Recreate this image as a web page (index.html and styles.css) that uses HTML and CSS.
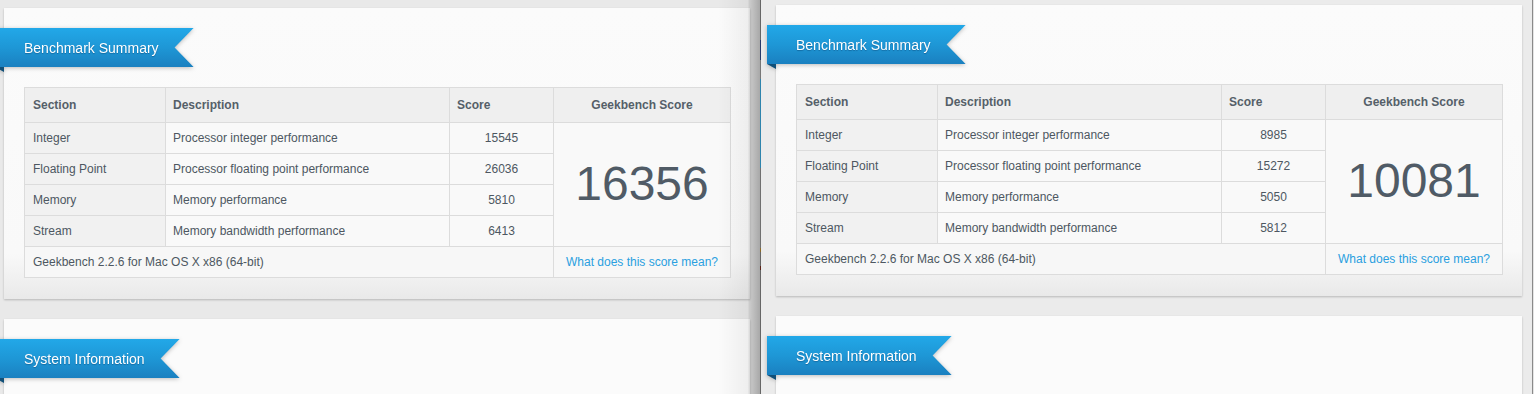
FILE: index.html
```html
<!DOCTYPE html>
<html lang="en">
<head>
<meta charset="utf-8">
<title>Geekbench comparison</title>
<link rel="stylesheet" href="styles.css">
</head>
<body>
<div class="desk">
  <div class="shot shot-left">
    <section class="card card-summary">
      <div class="ribbon">Benchmark Summary</div>
      <table class="bench">
        <colgroup><col class="c-sec"><col class="c-desc"><col class="c-score"><col class="c-gb"></colgroup>
        <thead>
          <tr><th class="sec">Section</th><th>Description</th><th>Score</th><th class="center">Geekbench Score</th></tr>
        </thead>
        <tbody>
          <tr><td class="sec">Integer</td><td>Processor integer performance</td><td class="center">15545</td><td class="total" rowspan="4">16356</td></tr>
          <tr><td class="sec">Floating Point</td><td>Processor floating point performance</td><td class="center">26036</td></tr>
          <tr><td class="sec">Memory</td><td>Memory performance</td><td class="center">5810</td></tr>
          <tr><td class="sec">Stream</td><td>Memory bandwidth performance</td><td class="center">6413</td></tr>
          <tr class="foot"><td colspan="3" class="sec-pad">Geekbench 2.2.6 for Mac OS X x86 (64-bit)</td><td class="center"><a href="#">What does this score mean?</a></td></tr>
        </tbody>
      </table>
    </section>
    <section class="card card-sys">
      <div class="ribbon">System Information</div>
    </section>
  </div>
  <div class="divider"></div>
  <div class="shot shot-right">
    <section class="card card-summary">
      <div class="ribbon">Benchmark Summary</div>
      <table class="bench">
        <colgroup><col class="c-sec"><col class="c-desc"><col class="c-score"><col class="c-gb"></colgroup>
        <thead>
          <tr><th class="sec">Section</th><th>Description</th><th>Score</th><th class="center">Geekbench Score</th></tr>
        </thead>
        <tbody>
          <tr><td class="sec">Integer</td><td>Processor integer performance</td><td class="center">8985</td><td class="total" rowspan="4">10081</td></tr>
          <tr><td class="sec">Floating Point</td><td>Processor floating point performance</td><td class="center">15272</td></tr>
          <tr><td class="sec">Memory</td><td>Memory performance</td><td class="center">5050</td></tr>
          <tr><td class="sec">Stream</td><td>Memory bandwidth performance</td><td class="center">5812</td></tr>
          <tr class="foot"><td colspan="3" class="sec-pad">Geekbench 2.2.6 for Mac OS X x86 (64-bit)</td><td class="center"><a href="#">What does this score mean?</a></td></tr>
        </tbody>
      </table>
    </section>
    <section class="card card-sys">
      <div class="ribbon">System Information</div>
    </section>
  </div>
  <div class="edge"></div>
</div>
</body>
</html>
```

FILE: styles.css
```css
* { box-sizing: border-box; }

html, body {
  margin: 0;
  padding: 0;
  background: #e8e8e8;
  font-family: "Liberation Sans", Arial, Helvetica, sans-serif;
  color: #4d5761;
}

.desk {
  display: flex;
  width: 1534px;
  height: 394px;
  overflow: hidden;
}

.shot {
  position: relative;
  overflow: hidden;
  height: 394px;
  background: #e9e9e9;
  display: flex;
  flex-direction: column;
  gap: 20px;
}

.shot-left {
  width: 760px;
  flex: none;
  padding: 8px 0 0 4px;
}

.shot-left::after {
  content: "";
  position: absolute;
  top: 0;
  right: 0;
  width: 42px;
  height: 100%;
  background: linear-gradient(to right,
    rgba(0,0,0,0) 0,
    rgba(0,0,0,0.05) 30px,
    rgba(0,0,0,0.12) 31px,
    rgba(0,0,0,0.28) 42px);
  pointer-events: none;
}

.shot-right {
  width: 771px;
  flex: none;
  padding: 5px 0 0 15px;
  background: #ebebeb;
}

.divider {
  width: 1px;
  flex: none;
  background: linear-gradient(to bottom,
    #666 0, #666 40px,
    #27396a 40px, #27396a 60px,
    #777 60px, #777 79px,
    #2e84ad 79px, #2e84ad 168px,
    #707070 168px, #707070 248px,
    #8a6a2a 248px, #8a6a2a 252px,
    #666 252px, #666 266px,
    #5a2318 266px, #5a2318 270px,
    #666 270px);
}

.edge {
  width: 3px;
  flex: none;
  background: #e4e4e4;
  border-left: 1px solid #8a8a8a;
}

.card {
  width: 746px;
  flex: none;
  padding: 20px 20px 21px 20px;
  background: #fbfbfb;
  box-shadow: 0 1px 2px rgba(0,0,0,0.22);
}

.card-summary {
  background: linear-gradient(to bottom, #fbfbfb 0, #f9f9f9 calc(100% - 45px), #e9e9e9 100%);
}

.card-sys {
  height: 200px;
}

.ribbon {
  position: relative;
  z-index: 0;
  display: flex;
  align-items: center;
  width: fit-content;
  height: 39px;
  margin: 0 0 20px -29px;
  padding: 0 35px 0 29px;
  color: #fff;
  font-size: 14px;
  text-shadow: 0 1px 1px rgba(0,40,80,0.35);
  filter: drop-shadow(0 1px 2px rgba(0,0,0,0.25));
}

.ribbon::before {
  content: "";
  position: absolute;
  inset: 0;
  z-index: -1;
  background: linear-gradient(to bottom, #22a8e8 0, #1e97d6 50%, #1a80c0 100%);
  clip-path: polygon(0 0, 100% 0, calc(100% - 19px) 50%, 100% 100%, 0 100%);
}

.ribbon::after {
  content: "";
  position: absolute;
  left: 0;
  top: 100%;
  width: 9px;
  height: 5px;
  background: #104f78;
  clip-path: polygon(0 0, 100% 0, 100% 100%);
}

.bench {
  width: 706px;
  table-layout: fixed;
  border-collapse: collapse;
  border: 1px solid #d9d9d9;
  font-size: 12px;
}

.c-sec { width: 141px; }
.c-desc { width: 284px; }
.c-score { width: 104px; }
.c-gb { width: 177px; }

.bench th,
.bench td {
  border: 1px solid #dcdcdc;
  padding: 0 8px 0 7px;
  text-align: left;
  vertical-align: middle;
  white-space: nowrap;
}

.bench .sec,
.bench .sec-pad { padding-left: 8px; }

.bench thead tr { height: 35px; }
.bench tbody tr { height: 31px; }

.bench th {
  background: #efefef;
  font-weight: bold;
  color: #555f69;
}

.bench td { background: #f9f9f9; }
.bench td.sec { background: #f1f1f1; }
.bench .foot td { background: #f7f7f7; }

.bench .center { text-align: center; padding: 0; }

.bench td.total {
  text-align: center;
  padding: 0 0 2px 0;
  font-size: 48px;
  color: #505b66;
  background: #f9f9f9;
}

.bench a {
  color: #2a9fe0;
  text-decoration: none;
}
```
